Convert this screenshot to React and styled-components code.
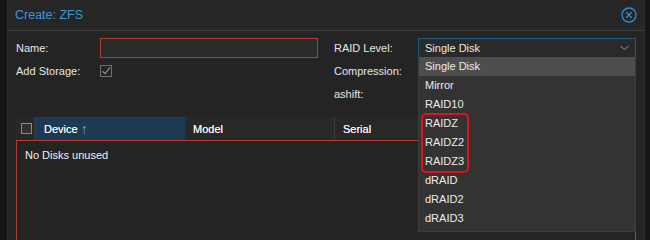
import React from "react";
import styled, { createGlobalStyle } from "styled-components";

const GlobalStyle = createGlobalStyle`
  body {
    margin: 0;
    background: #151515;
    font-family: "Liberation Sans", Arial, sans-serif;
    font-size: 11px;
    color: #e0e0e0;
    overflow: hidden;
  }
`;

const Screen = styled.div`
  display: flex;
  height: 240px;
  padding-left: 7px;
  overflow: hidden;
`;

const Win = styled.div`
  position: relative;
  width: 638px;
  height: 260px;
  background: #242424;
  border-left: 1px solid #2e2e2e;
  border-right: 1px solid #2e2e2e;
  box-sizing: border-box;
`;

const TitleBar = styled.div`
  height: 30px;
  display: flex;
  align-items: center;
  justify-content: space-between;
  padding: 0 7px 0 7px;
  background: #262626;
  border-bottom: 1px solid #3a3a3a;
`;

const Title = styled.span`
  color: #3b97d6;
  font-size: 12.5px;
`;

const Body = styled.div`
  padding: 7px 8px 0;
`;

const Form = styled.div`
  display: grid;
  grid-template-columns: 302px 302px;
  column-gap: 16px;
`;

const Column = styled.div`
  display: flex;
  flex-direction: column;
  gap: 3px;
`;

const Row = styled.div`
  display: flex;
  align-items: center;
  height: 20px;
`;

const Label = styled.label`
  width: 84px;
  flex-shrink: 0;
  color: #e6e6e6;
`;

const TextInput = styled.div`
  width: 218px;
  height: 20px;
  box-sizing: border-box;
  background: #2a2a2a;
  border: 1px solid ${(p) => (p.$invalid ? "#b23e2e" : "#1e5c88")};
  display: flex;
  align-items: center;
  justify-content: space-between;
  padding: 0 6px;
  color: #e8e8e8;
`;

const Check = styled.span`
  width: 12px;
  height: 12px;
  box-sizing: border-box;
  border: 1px solid #707070;
  display: flex;
  align-items: center;
  justify-content: center;
`;

const Grid = styled.div`
  margin-top: 13px;
`;

const GridHead = styled.div`
  display: flex;
  height: 23px;
  background: #282828;
`;

const HeadCell = styled.div`
  width: ${(p) => p.$w}px;
  flex-shrink: 0;
  box-sizing: border-box;
  display: flex;
  align-items: center;
  padding-left: ${(p) => p.$pad ?? 8}px;
  color: #f0f0f0;
  text-shadow: 0 0 0.4px #f0f0f0;
  background: ${(p) => (p.$active ? "#1c3a51" : "transparent")};
  border-right: 1px solid ${(p) => (p.$active ? "#1c3a51" : "#3a3a3a")};
  ${(p) => p.$grow && "flex: 1; border-right: none;"}
`;

const HeadBox = styled.span`
  width: 11px;
  height: 11px;
  box-sizing: border-box;
  border: 1px solid #8a8a8a;
  background: #303030;
`;

const SortArrow = styled.span`
  margin-left: 3px;
  font-size: 14px;
  color: #8aa4ba;
  text-shadow: none;
`;

const GridBody = styled.div`
  height: 110px;
  border: 1px solid #b23e2e;
  padding: 8px 8px;
  color: #f0f0f0;
`;

const Dropdown = styled.ul`
  position: absolute;
  left: 410px;
  top: 57px;
  width: 218px;
  margin: 0;
  padding: 0 0 3px;
  list-style: none;
  box-sizing: border-box;
  background: #333333;
  border: 1px solid #3d3d3d;
  border-top: none;
`;

const Item = styled.li`
  height: 19px;
  line-height: 19px;
  padding-left: 6px;
  color: #ececec;
  background: ${(p) => (p.$selected ? "#4e4e4e" : "transparent")};
`;

const Mark = styled.div`
  position: absolute;
  left: 413px;
  top: 113px;
  width: 48px;
  height: 60px;
  box-sizing: border-box;
  border: 2px solid #e0121c;
  border-radius: 5px;
`;

const CloseIcon = () => (
  <svg width="16" height="16" viewBox="0 0 16 16">
    <circle cx="8" cy="8" r="7" fill="none" stroke="#2f8fce" strokeWidth="1.3" />
    <path d="M5.3 5.3 L10.7 10.7 M10.7 5.3 L5.3 10.7" stroke="#2f8fce" strokeWidth="1.3" />
  </svg>
);

const Chevron = () => (
  <svg width="9" height="6" viewBox="0 0 9 6">
    <path d="M0.5 0.8 L4.5 4.6 L8.5 0.8" fill="none" stroke="#7a7a7a" strokeWidth="1.1" />
  </svg>
);

const Tick = () => (
  <svg width="10" height="10" viewBox="0 0 10 10">
    <path d="M1.5 5.2 L4 7.6 L9 1.5" fill="none" stroke="#8c8c8c" strokeWidth="1.2" />
  </svg>
);

const levels = ["Single Disk", "Mirror", "RAID10", "RAIDZ", "RAIDZ2", "RAIDZ3", "dRAID", "dRAID2", "dRAID3"];

const App = () => {
  return (
    <>
      <GlobalStyle />
      <Screen>
        <Win>
          <TitleBar>
            <Title>Create: ZFS</Title>
            <CloseIcon />
          </TitleBar>
          <Body>
            <Form>
              <Column>
                <Row>
                  <Label>Name:</Label>
                  <TextInput $invalid />
                </Row>
                <Row>
                  <Label>Add Storage:</Label>
                  <Check>
                    <Tick />
                  </Check>
                </Row>
              </Column>
              <Column>
                <Row>
                  <Label>RAID Level:</Label>
                  <TextInput>
                    Single Disk
                    <Chevron />
                  </TextInput>
                </Row>
                <Row>
                  <Label>Compression:</Label>
                </Row>
                <Row>
                  <Label>ashift:</Label>
                </Row>
              </Column>
            </Form>
            <Grid>
              <GridHead>
                <HeadCell $w={19} $pad={5}>
                  <HeadBox />
                </HeadCell>
                <HeadCell $w={150} $pad={9} $active>
                  Device<SortArrow>↑</SortArrow>
                </HeadCell>
                <HeadCell $w={150}>Model</HeadCell>
                <HeadCell $grow>Serial</HeadCell>
              </GridHead>
              <GridBody>No Disks unused</GridBody>
            </Grid>
          </Body>
          <Dropdown>
            {levels.map((l, i) => (
              <Item key={l} $selected={i === 0}>
                {l}
              </Item>
            ))}
          </Dropdown>
          <Mark />
        </Win>
      </Screen>
    </>
  );
};

export default App;
